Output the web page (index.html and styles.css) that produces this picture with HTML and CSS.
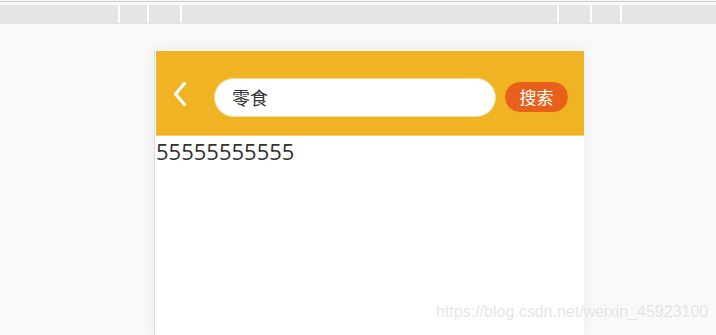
FILE: index.html
```html
<!DOCTYPE html>
<html lang="zh">
<head>
<meta charset="utf-8">
<title>搜索</title>
<link rel="stylesheet" href="styles.css">
</head>
<body>
<div class="topline"></div>
<div class="tabs">
  <div class="seg s1"></div><div class="sep"></div>
  <div class="seg s2"></div><div class="sep"></div>
  <div class="seg s3"></div><div class="sep"></div>
  <div class="seg s4"></div><div class="sep"></div>
  <div class="seg s5"></div><div class="sep"></div>
  <div class="seg s6"></div><div class="sep"></div>
  <div class="seg s7"></div>
</div>
<div class="stage">
  <div class="phone">
    <div class="header">
      <svg class="back" width="14" height="24" viewBox="0 0 14 24"><path d="M11.5 1.5 L2.5 12 L11.5 22.5" fill="none" stroke="#fff" stroke-width="3.2" stroke-linecap="round" stroke-linejoin="round"/></svg>
      <div class="search">零食</div>
      <div class="btn">搜索</div>
    </div>
    <div class="content">55555555555</div>
  </div>
</div>
<div class="watermark">https://blog.csdn.net/weixin_45923100</div>
</body>
</html>
```
FILE: styles.css
```css
html, body {
  margin: 0;
  padding: 0;
  height: 100%;
  overflow: hidden;
}
body {
  background: #f9f9f9;
  font-family: "Open Sans", "Noto Sans CJK SC", sans-serif;
  position: relative;
}
.topline {
  height: 1px;
  margin-top: 1px;
  background: #cbcbcb;
}
.tabs {
  margin-top: 3px;
  height: 19px;
  display: flex;
  background: #e5e5e5;
}
.seg { height: 19px; }
.sep {
  width: 2px;
  height: 18px;
  background: #ffffff;
  box-shadow: 0 0 1px rgba(0,0,0,0.08);
}
.s1 { width: 118px; }
.s2 { width: 27px; }
.s3 { width: 31px; }
.s4 { width: 375px; }
.s5 { width: 31px; }
.s6 { width: 28px; }
.s7 { flex: 1; }
.stage {
  padding-top: 26px;
  padding-left: 154px;
}
.phone {
  width: 430px;
  height: 285px;
  box-sizing: border-box;
  padding: 1px 0 0 1px;
  background: #ffffff;
  border-left: 1px solid #dcdcdc;
  box-shadow: 0 0 14px rgba(0,0,0,0.07);
}
.header {
  height: 85px;
  background: #f0b323;
  display: flex;
  align-items: center;
  padding: 8px 0 0 0;
  box-sizing: border-box;
  border-bottom: 1px solid #f4cf7a;
}
.back {
  margin-left: 17px;
  margin-top: -7px;
  flex: none;
}
.search {
  margin-left: 27px;
  width: 282px;
  height: 39px;
  box-sizing: border-box;
  background: #ffffff;
  border: 1px solid #f6dc9a;
  border-radius: 20px;
  padding-left: 17px;
  font-family: "Noto Sans CJK SC", sans-serif;
  font-size: 18px;
  line-height: 37px;
  color: #333333;
}
.btn {
  margin-left: 8px;
  width: 65px;
  height: 32px;
  box-sizing: border-box;
  background: #e8601b;
  border: 1px solid #efb81f;
  border-radius: 16px;
  color: #ffffff;
  font-family: "Noto Sans CJK SC", sans-serif;
  font-size: 17px;
  line-height: 30px;
  text-align: center;
}
.content {
  font-family: "Open Sans", sans-serif;
  font-size: 22px;
  line-height: 30px;
  color: #333333;
}
.watermark {
  position: absolute;
  left: 436px;
  top: 303px;
  font-family: "Liberation Sans", Arial, sans-serif;
  font-size: 16px;
  color: rgba(225, 225, 225, 0.85);
  white-space: nowrap;
}
```
